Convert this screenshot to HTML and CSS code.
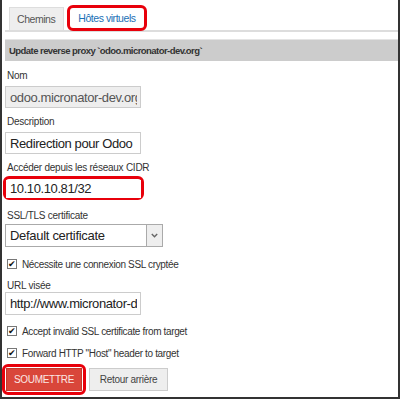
FILE: index.html
```html
<!DOCTYPE html>
<html lang="fr">
<head>
  <meta charset="UTF-8">
  <title>Hôtes virtuels</title>
  <link rel="stylesheet" href="styles.css">
</head>
<body>
  <div class="frame">
    <!-- Onglets -->
    <div class="tabs">
      <div class="tab">Chemins</div>
      <div class="tab tab-active">Hôtes virtuels</div>
    </div>

    <div class="panel-title">Update reverse proxy `odoo.micronator-dev.org`</div>

    <form class="form">
      <label class="field-label">Nom</label>
      <input class="text-input" type="text" value="odoo.micronator-dev.org" disabled>

      <label class="field-label">Description</label>
      <input class="text-input" type="text" value="Redirection pour Odoo">

      <label class="field-label">Accéder depuis les réseaux CIDR</label>
      <div class="mark-input">
        <input class="text-input" type="text" value="10.10.10.81/32">
      </div>

      <label class="field-label label-ssl">SSL/TLS certificate</label>
      <div class="select">
        <span class="select-value">Default certificate</span>
        <span class="select-arrow">
          <svg width="7" height="5" viewBox="0 0 7 5"><path d="M0.8 1 L3.5 3.8 L6.2 1" fill="none" stroke="#666" stroke-width="1.4"/></svg>
        </span>
      </div>

      <label class="check check-ssl"><span class="box">✔</span>Nécessite une connexion SSL cryptée</label>

      <label class="field-label label-url">URL visée</label>
      <input class="text-input input-url" type="text" value="http://www.micronator-dev.org/">

      <label class="check"><span class="box">✔</span>Accept invalid SSL certificate from target</label>
      <label class="check"><span class="box">✔</span>Forward HTTP "Host" header to target</label>

      <div class="actions">
        <div class="mark-btn">
          <button type="button" class="btn btn-submit">SOUMETTRE</button>
        </div>
        <button type="button" class="btn btn-back">Retour arrière</button>
      </div>
    </form>
  </div>
</body>
</html>
```

FILE: styles.css
```css
* {
  margin: 0;
  padding: 0;
  box-sizing: border-box;
}

body {
  font-family: Arial, "Liberation Sans", sans-serif;
  background: #fff;
  width: 400px;
  height: 399px;
  overflow: hidden;
}

.frame {
  width: 400px;
  height: 399px;
  border: 2px solid #333;
  border-top: none;
  padding: 7px 0 0 3px;
  background: #fff;
  color: #333;
}

/* onglets */
.tabs {
  display: flex;
  align-items: flex-end;
  gap: 3px;
  padding-left: 4px;
  height: 25px;
  border-bottom: 2px solid #ddd;
}

.tab {
  font-size: 10.5px;
  letter-spacing: -0.45px;
  color: #555;
  background: #eee;
  border: 1px solid #ddd;
  border-bottom: none;
  padding: 0 8px 0 7px;
  height: 23px;
  line-height: 23px;
}

.tab-active {
  background: #fff;
  color: #1a6fb5;
  border: 3px solid #e8000b;
  border-radius: 6px;
  padding: 0 8px;
  height: 26px;
  line-height: 20px;
  margin-bottom: -1px;
}

.panel-title {
  margin-top: 7px;
  background: #ccc;
  border-top: 1px solid #e4e4e4;
  font-size: 9.5px;
  letter-spacing: -0.55px;
  font-weight: bold;
  color: #333;
  height: 22px;
  line-height: 21px;
  padding-left: 4px;
}

.form {
  display: flex;
  flex-direction: column;
  align-items: flex-start;
  padding-top: 9px;
}

.field-label {
  font-size: 10px;
  letter-spacing: -0.25px;
  color: #333;
  line-height: 12px;
  margin: 0 0 4px 2px;
}

.text-input {
  width: 136px;
  height: 22px;
  border: 1px solid #ccc;
  background: #fff;
  font-family: inherit;
  font-size: 13px;
  letter-spacing: -0.4px;
  color: #222;
  padding: 0 3px 0 4px;
  margin-bottom: 8px;
  outline: none;
}

.text-input:disabled {
  background: #eee;
  color: #555;
}

.mark-input {
  border: 3px solid #e8000b;
  border-radius: 6px;
  margin: -2px 0 10px -2px;
  width: 141px;
  height: 24px;
}

.mark-input .text-input {
  margin: 0;
  border: none;
  height: 18px;
  width: 135px;
  padding-left: 4px;
}

.label-ssl {
  margin-bottom: 2px;
}

.select {
  display: flex;
  width: 158px;
  height: 23px;
  border: 1px solid #aaa;
  margin-bottom: 10px;
}

.select-value {
  flex: 1;
  font-size: 13px;
  letter-spacing: -0.3px;
  line-height: 21px;
  padding-left: 4px;
  color: #222;
}

.select-arrow {
  width: 16px;
  border-left: 1px solid #aaa;
  background: #eee;
  display: flex;
  align-items: center;
  justify-content: center;
}

.check {
  display: flex;
  align-items: center;
  font-size: 10px;
  letter-spacing: -0.35px;
  color: #333;
  height: 14px;
  margin: 0 0 8px 2px;
}

.check-ssl {
  margin-bottom: 9px;
}

.label-url {
  margin-bottom: 0;
}

.input-url {
  height: 23px;
  margin-bottom: 9px;
}

.box {
  width: 10px;
  height: 10px;
  border: 1px solid #777;
  background: #fff;
  font-size: 9px;
  letter-spacing: 0;
  line-height: 8px;
  text-align: center;
  color: #111;
  margin-right: 5px;
}

.actions {
  display: flex;
  align-items: center;
  gap: 3px;
  margin: -4px 0 0 -3px;
}

.mark-btn {
  border: 3px solid #e8000b;
  border-radius: 6px;
  padding: 1px;
}

.btn {
  font-family: inherit;
  font-size: 10px;
  letter-spacing: -0.3px;
  height: 23px;
  cursor: pointer;
}

.btn-submit {
  background: #d9463a;
  color: #fbe6e4;
  border: 1px solid #c9372c;
  width: 76px;
}

.btn-back {
  background: #eee;
  color: #444;
  border: 1px solid #ccc;
  width: 79px;
}
```
